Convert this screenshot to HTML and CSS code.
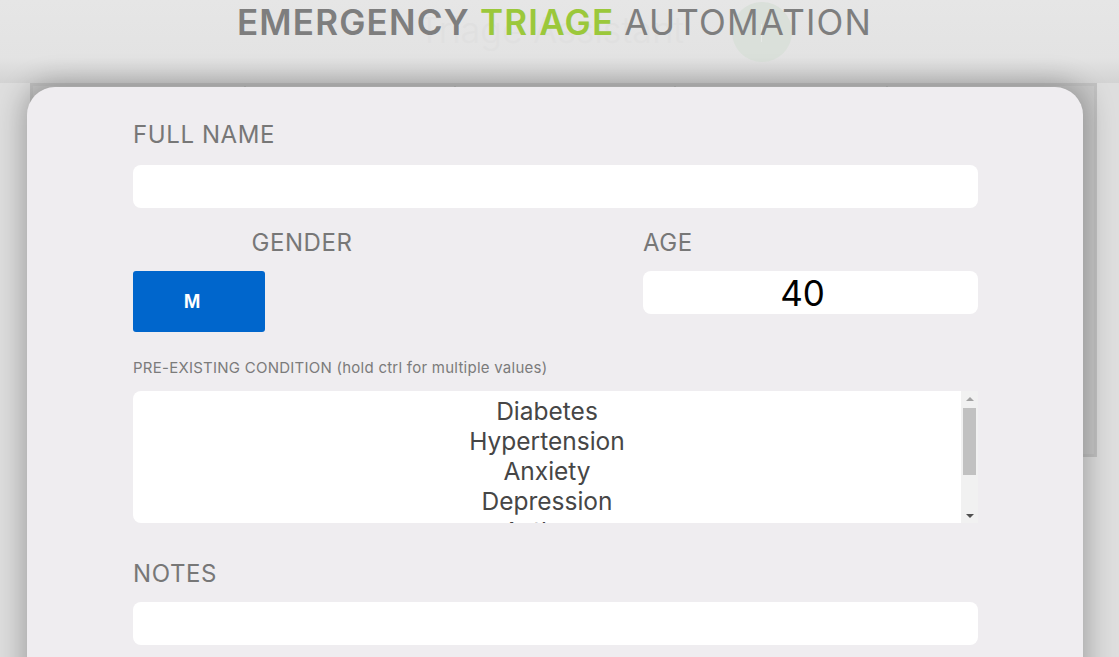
FILE: index.html
```html
<!DOCTYPE html>
<html lang="en">
<head>
<meta charset="utf-8">
<title>Emergency Triage Automation</title>
<link rel="stylesheet" href="styles.css">
</head>
<body>
<header class="top">
  <div class="ghost-text">Triage Assistant</div>
  <div class="ghost-dot"><span class="ghost-dot-line"></span></div>
  <h1 class="title"><span class="t-dark">EMERGENCY</span> <span class="t-green">TRIAGE</span> <span class="t-light">AUTOMATION</span></h1>
</header>

<div class="board">
  <div class="board-col"></div>
  <div class="board-col"></div>
  <div class="board-col"></div>
  <div class="board-col"></div>
  <div class="board-col"></div>
</div>

<div class="modal">
  <form class="form">
    <label class="lbl" for="fullname">FULL NAME</label>
    <input class="field" id="fullname" type="text">

    <div class="row">
      <div class="col">
        <div class="lbl lbl-center">GENDER</div>
        <button class="gender-btn" type="button">M</button>
      </div>
      <div class="col">
        <label class="lbl" for="age">AGE</label>
        <input class="field field-age" id="age" type="text" value="40">
      </div>
    </div>

    <div class="lbl-small" id="cond-label">PRE-EXISTING CONDITION (hold ctrl for multiple values)</div>
    <div class="listbox" role="listbox" aria-multiselectable="true" aria-labelledby="cond-label">
      <div class="list-viewport">
        <div class="cond-option" role="option">Diabetes</div>
        <div class="cond-option" role="option">Hypertension</div>
        <div class="cond-option" role="option">Anxiety</div>
        <div class="cond-option" role="option">Depression</div>
        <div class="cond-option" role="option">Asthma</div>
        <div class="cond-option" role="option">Obesity</div>
      </div>
      <div class="scrollbar" aria-hidden="true">
        <span class="sb-btn"><span class="sb-arrow-up"></span></span>
        <span class="sb-track"><span class="sb-thumb"></span></span>
        <span class="sb-btn"><span class="sb-arrow-down"></span></span>
      </div>
    </div>

    <label class="lbl lbl-notes" for="notes">NOTES</label>
    <input class="field" id="notes" type="text">
  </form>
</div>
</body>
</html>
```

FILE: styles.css
```css
html, body {
  margin: 0;
  padding: 0;
}

body {
  width: 1119px;
  height: 657px;
  overflow: hidden;
  background: #dedede;
  font-family: "Inter", "DejaVu Sans", sans-serif;
  position: relative;
}

.top {
  position: relative;
  height: 83px;
  box-sizing: border-box;
  padding-top: 5px;
  background: linear-gradient(#e6e6e6 0, #e3e3e3 58px, #d3d3d3 83px);
}

.ghost-text {
  position: absolute;
  left: 418px;
  top: 12px;
  font-size: 36px;
  font-weight: 300;
  color: #e0e0e0;
  line-height: 36px;
}

.ghost-dot {
  position: absolute;
  left: 732px;
  top: 2px;
  width: 60px;
  height: 60px;
  border-radius: 50%;
  background: #dae0da;
}

.ghost-dot-line {
  position: absolute;
  left: 29px;
  top: 22px;
  width: 1px;
  height: 18px;
  background: #e6e9e6;
}

.title {
  position: relative;
  margin: 0;
  text-align: center;
  font-size: 35px;
  line-height: 35px;
  font-weight: 600;
  letter-spacing: 1.2px;
  color: #7e7e7e;
  padding-right: 10px;
}

.t-green {
  color: #9bc83b;
}

.t-light {
  font-weight: 400;
}

.board {
  margin-left: 30px;
  width: 1067px;
  height: 374px;
  box-sizing: border-box;
  border: 3px solid #c2c2c2;
  background: #c9c9c9;
  display: grid;
  grid-template-columns: 213px 210px 220px 212px 1fr;
}

.board-col {
  border-right: 2px solid #bcbcbc;
}

.board-col:last-child {
  border-right: none;
}

.modal {
  position: absolute;
  left: 27px;
  top: 87px;
  width: 1056px;
  height: 640px;
  border-radius: 28px;
  background: #efedf0;
  box-shadow: 0 0 28px 4px rgba(0, 0, 0, 0.28);
}

.form {
  padding: 36px 105px 0 106px;
  display: flex;
  flex-direction: column;
}

.lbl {
  display: block;
  font-size: 24px;
  line-height: 24px;
  color: #777;
  letter-spacing: 0.6px;
  margin-bottom: 18px;
}

.lbl-center {
  text-align: center;
  margin-bottom: 16px;
}

.field {
  display: block;
  width: 100%;
  height: 43px;
  box-sizing: border-box;
  border: none;
  border-radius: 8px;
  background: #fff;
  padding: 0 12px;
  font-family: inherit;
  font-size: 20px;
  outline: none;
}

.row {
  display: flex;
  justify-content: space-between;
  margin-top: 23px;
}

.col {
  width: 335px;
  display: flex;
  flex-direction: column;
  align-items: flex-start;
}

.col:first-child {
  width: 338px;
  align-items: stretch;
}

.col .lbl {
  margin-bottom: 16px;
}

.gender-btn {
  align-self: flex-start;
  width: 132px;
  height: 61px;
  border: none;
  border-radius: 3px;
  background: #0066cc;
  color: #fff;
  font-family: "Liberation Sans", Arial, sans-serif;
  font-weight: 700;
  font-size: 20px;
  padding: 0 14px 0 0;
}

.field-age {
  text-align: center;
  font-size: 35px;
  color: #000;
  padding: 0 28px 0 12px;
}

.lbl-small {
  display: block;
  margin-top: 28px;
  margin-bottom: 16px;
  font-size: 15px;
  line-height: 15px;
  letter-spacing: 0.25px;
  color: #7b7b7b;
}

.listbox {
  display: flex;
  height: 132px;
  border-radius: 8px 0 0 8px;
  background: #fff;
  overflow: hidden;
}

.list-viewport {
  flex: 1;
  overflow: hidden;
  padding-top: 5px;
  font-size: 24.5px;
  color: #464646;
}

.cond-option {
  line-height: 30px;
  text-align: center;
}

.scrollbar {
  width: 17px;
  flex: none;
  display: flex;
  flex-direction: column;
  background: #f1f1f1;
}

.sb-btn {
  height: 17px;
  flex: none;
  display: flex;
  align-items: center;
  justify-content: center;
}

.sb-arrow-up {
  width: 0;
  height: 0;
  border-left: 4px solid transparent;
  border-right: 4px solid transparent;
  border-bottom: 4px solid #a3a3a3;
  margin-top: -2px;
}

.sb-arrow-down {
  width: 0;
  height: 0;
  border-left: 4px solid transparent;
  border-right: 4px solid transparent;
  border-top: 4px solid #505050;
  margin-top: 2px;
}

.sb-track {
  flex: 1;
  padding: 0 2px;
}

.sb-thumb {
  display: block;
  height: 67px;
  background: #c1c1c1;
}

.lbl-notes {
  margin-top: 39px;
  margin-bottom: 16px;
}
```
